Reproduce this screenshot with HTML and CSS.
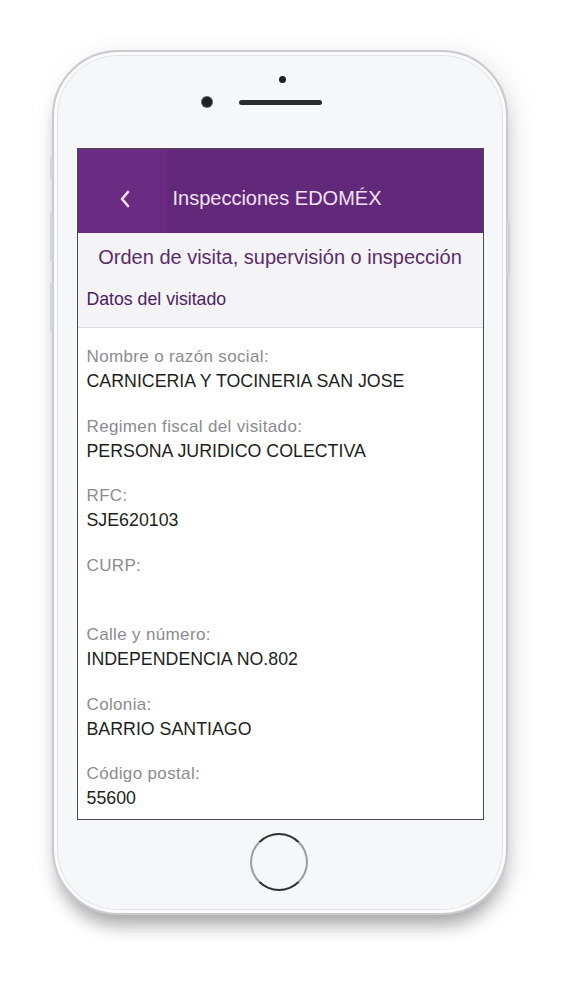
FILE: index.html
```html
<!DOCTYPE html>
<html lang="es">
<head>
<meta charset="utf-8">
<title>Inspecciones EDOMÉX</title>
<link rel="stylesheet" href="styles.css">
</head>
<body>
<div class="stage">
  <div class="phone">
    <span class="side-btn btn-mute"></span>
    <span class="side-btn btn-vol-up"></span>
    <span class="side-btn btn-vol-down"></span>
    <span class="side-btn btn-power"></span>
    <div class="phone-top">
      <span class="sensor"></span>
      <div class="cam-row">
        <span class="camera"></span>
        <span class="speaker"></span>
      </div>
    </div>
    <div class="screen">
      <header class="appbar">
        <div class="back">
          <svg width="14" height="20" viewBox="0 0 14 20" aria-hidden="true">
            <path d="M10 3 L4 10 L10 17" fill="none" stroke="#f3e3f3" stroke-width="2.6" stroke-linecap="round" stroke-linejoin="round"/>
          </svg>
        </div>
        <h1 class="title">Inspecciones EDOMÉX</h1>
      </header>
      <section class="subhead">
        <h2 class="subtitle">Orden de visita, supervisión o inspección</h2>
        <p class="section">Datos del visitado</p>
      </section>
      <dl class="fields">
        <div class="field"><dt>Nombre o razón social:</dt><dd>CARNICERIA Y TOCINERIA SAN JOSE</dd></div>
        <div class="field"><dt>Regimen fiscal del visitado:</dt><dd>PERSONA JURIDICO COLECTIVA</dd></div>
        <div class="field"><dt>RFC:</dt><dd>SJE620103</dd></div>
        <div class="field"><dt>CURP:</dt><dd></dd></div>
        <div class="field"><dt>Calle y número:</dt><dd>INDEPENDENCIA NO.802</dd></div>
        <div class="field"><dt>Colonia:</dt><dd>BARRIO SANTIAGO</dd></div>
        <div class="field"><dt>Código postal:</dt><dd>55600</dd></div>
      </dl>
    </div>
    <div class="phone-bottom">
      <span class="home"></span>
    </div>
  </div>
</div>
</body>
</html>
```
FILE: styles.css
```css
* { box-sizing: border-box; }
html, body {
  margin: 0;
  padding: 0;
  background: #ffffff;
  font-family: "Liberation Sans", Arial, sans-serif;
}
.stage {
  width: 563px;
  height: 1000px;
  padding: 50px 0 0 52px;
}
.phone {
  position: relative;
  width: 456px;
  height: 865px;
  border-radius: 66px;
  background: #f6f7f9;
  border: 2px solid #c9cacd;
  box-shadow:
    inset 0 0 0 3px #fbfbfc,
    inset 0 0 0 4px #e3e4e7,
    0 16px 18px -6px rgba(0,0,0,0.30),
    6px 4px 26px rgba(0,0,0,0.10);
  display: flex;
  flex-direction: column;
  align-items: center;
}
.side-btn {
  position: absolute;
  left: -4px;
  width: 3px;
  background: #d4d5d8;
  border-radius: 2px 0 0 2px;
}
.btn-mute { top: 105px; height: 22px; }
.btn-vol-up { top: 160px; height: 50px; }
.btn-vol-down { top: 230px; height: 50px; }
.btn-power { left: auto; right: -4px; top: 170px; height: 56px; border-radius: 0 2px 2px 0; }

.phone-top {
  height: 96px;
  width: 100%;
  display: flex;
  flex-direction: column;
  align-items: center;
  padding-top: 24px;
}
.sensor {
  width: 7px;
  height: 7px;
  border-radius: 50%;
  background: #1f2124;
  margin-left: 4px;
}
.cam-row {
  display: flex;
  align-items: center;
  margin-top: 14px;
  margin-left: -36px;
}
.camera {
  width: 10px;
  height: 10px;
  border-radius: 50%;
  background: #1f2124;
  box-shadow: 0 0 0 1px #5a5c60;
}
.speaker {
  width: 83px;
  height: 5px;
  border-radius: 3px;
  background: #2a2c30;
  margin-left: 27px;
}

.screen {
  width: 407px;
  height: 672px;
  border: 1.5px solid #4a4a4e;
  background: #ffffff;
  overflow: hidden;
  display: flex;
  flex-direction: column;
}
.appbar {
  height: 84px;
  flex: none;
  background: #62287a;
  display: flex;
  align-items: stretch;
}
.back {
  width: 89px;
  background: #6b2b83;
  display: flex;
  align-items: center;
  justify-content: center;
  padding-top: 15px;
  padding-left: 6px;
}
.title {
  margin: 0 0 0 6px;
  align-self: center;
  padding-top: 14px;
  font-weight: normal;
  font-size: 20px;
  color: #f3e2f3;
}
.subhead {
  height: 95px;
  flex: none;
  background: #f4f3f5;
  border-bottom: 1px solid #dddcdf;
  padding-top: 12px;
}
.subtitle {
  margin: 0;
  text-align: center;
  font-weight: normal;
  font-size: 20px;
  line-height: 24px;
  color: #5a2c6c;
}
.section {
  margin: 18px 0 0 9px;
  font-size: 17.7px;
  line-height: 24px;
  color: #4c2162;
}
.fields {
  margin: 0;
  padding: 17px 0 0 9px;
}
.field {
  margin-bottom: 21.5px;
}
.field dt {
  font-size: 17px;
  letter-spacing: 0.35px;
  line-height: 24px;
  color: #8b8b8e;
}
.field dd {
  margin: 0;
  min-height: 24px;
  font-size: 17.8px;
  line-height: 24px;
  color: #1e1e20;
}

.phone-bottom {
  flex: 1;
  width: 100%;
  display: flex;
  justify-content: center;
  padding-top: 13px;
}
.home {
  width: 58px;
  height: 58px;
  border-radius: 50%;
  border: 2px solid #2f3134;
  border-left-color: #9a9ca0;
  border-right-color: #9a9ca0;
  background: #f6f7f9;
  margin-left: -2px;
}
```
